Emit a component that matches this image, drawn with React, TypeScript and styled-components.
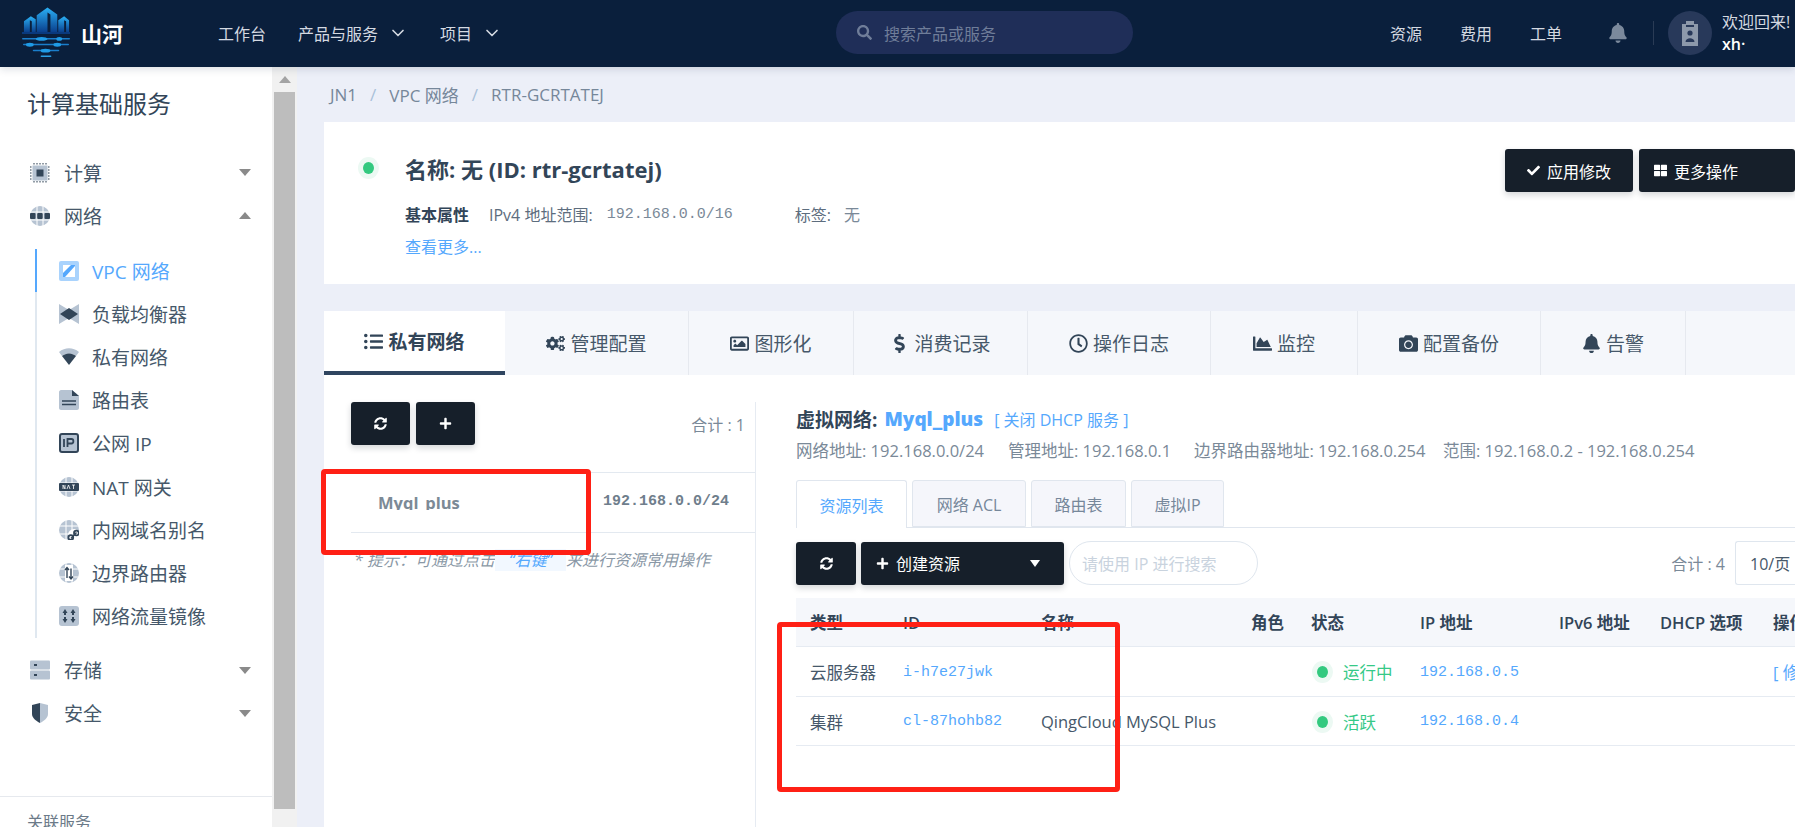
import React from 'react';
import styled, { createGlobalStyle } from 'styled-components';
import {
  FaBell,
  FaCamera,
  FaChartArea,
  FaCheck,
  FaCogs,
  FaDollarSign,
  FaListUl,
  FaPlus,
  FaRegClock,
  FaRegImage,
  FaSearch,
  FaSyncAlt,
  FaThLarge,
} from 'react-icons/fa';
import { FiChevronDown } from 'react-icons/fi';

const SANS = `"Open Sans", "Noto Sans CJK SC", sans-serif`;
const MONO = `"Liberation Mono", "Noto Sans CJK SC", monospace`;
const DARK = '#324558';
const LIGHT = '#b6c3d2';

const GlobalStyle = createGlobalStyle`
  html, body { margin: 0; padding: 0; height: 100%; background: #eceff8; }
  body { font-family: ${SANS}; color: #324558; }
  #root { height: 100%; }
  * { box-sizing: border-box; }
`;

const Logo = () => (
  <svg width="50" height="54" viewBox="0 0 50 54">
    <defs>
      <linearGradient id="tower" x1="0" y1="0" x2="0" y2="1">
        <stop offset="0" stopColor="#2ab0f5" />
        <stop offset="1" stopColor="#0a3f8c" />
      </linearGradient>
    </defs>
    <path d="M2 15 L9 10 L14 13 V26 H10 V15 L8 14 V26 H2 Z" fill="url(#tower)" />
    <path d="M15 9 L26 1 L36 8 V26 H29 V8 L26 6 V26 H15 Z" fill="url(#tower)" />
    <path d="M37 14 L43 10 L48 14 V26 H45 V15 L43 14 V26 H37 Z" fill="url(#tower)" />
    <rect x="0" y="26" width="49" height="2" fill="#0b3a7e" />
    <rect x="0" y="32" width="49" height="1.6" rx="0.8" fill="#1a7ecb" />
    <rect x="1" y="38" width="47" height="1.6" rx="0.8" fill="#1a7ecb" />
    <rect x="11" y="44" width="27" height="1.6" rx="0.8" fill="#1a7ecb" />
    <rect x="19" y="50" width="11" height="1.6" rx="0.8" fill="#2aa0e6" />
    <ellipse cx="20" cy="33" rx="6" ry="2" fill="#1f9be6" />
    <ellipse cx="38" cy="33" rx="3" ry="2" fill="#1f9be6" />
    <ellipse cx="8" cy="39" rx="4" ry="2" fill="#1f9be6" />
    <ellipse cx="36" cy="39" rx="4" ry="2" fill="#1f9be6" />
    <ellipse cx="24" cy="45" rx="5" ry="2" fill="#1f9be6" />
  </svg>
);

const AvatarGlyph = () => (
  <svg width="16" height="26" viewBox="0 0 16 26">
    <path d="M0 4 H4 V1 H12 V4 H16 V26 H0 Z" fill="#8d99ab" />
    <rect x="4" y="5" width="8" height="2" fill="#28395a" />
    <circle cx="8" cy="13" r="2.6" fill="#28395a" />
    <path d="M3.5 22 C3.5 17 12.5 17 12.5 22 Z" fill="#28395a" />
  </svg>
);

type IconName =
  | 'chip'
  | 'globe'
  | 'vpc'
  | 'lb'
  | 'wifi'
  | 'route'
  | 'ip'
  | 'nat'
  | 'link'
  | 'border'
  | 'mirror'
  | 'disk'
  | 'shield';

const Duotone = ({ name }: { name: IconName }) => {
  const ball = (
    <>
      <circle cx="10" cy="10" r="10" fill={LIGHT} />
      <path d="M7 0 V20 M13 0 V20 M0 6 H20 M0 14 H20" stroke="#fff" strokeWidth="1" />
    </>
  );
  const shapes: Record<IconName, React.ReactNode> = {
    chip: (
      <>
        <path d="M4 0V20M7 0V20M10 0V20M13 0V20M16 0V20M0 4H20M0 7H20M0 10H20M0 13H20M0 16H20" stroke={DARK} strokeWidth="1.5" strokeDasharray="1.5 1.5" opacity=".7" />
        <rect x="2.5" y="2.5" width="15" height="15" fill={LIGHT} />
        <rect x="6.5" y="6.5" width="7" height="7" fill={DARK} />
      </>
    ),
    globe: (
      <>
        {ball}
        <rect x="0" y="7" width="5.5" height="6" rx="1" fill={DARK} />
        <rect x="7.2" y="7" width="5.5" height="6" rx="1" fill={DARK} />
        <rect x="14.5" y="7" width="5.5" height="6" rx="1" fill={DARK} />
      </>
    ),
    vpc: (
      <>
        <rect width="20" height="20" rx="2" fill="#a9d3fd" />
        <path d="M4 4 H16 V16 H4 Z" fill="#fff" />
        <path d="M4 16 L4 12 L12 4 L16 4 L16 5 L6 16 Z" fill="#55a8fd" />
      </>
    ),
    lb: (
      <>
        <path d="M0 0 L10 6 L20 0 V20 L10 14 L0 20 Z" fill={LIGHT} />
        <path d="M10 4 L19 10 L10 16 L1 10 Z" fill={DARK} />
      </>
    ),
    wifi: (
      <>
        <path d="M0 5 C6 0 14 0 20 5 L17 9 C13 6 7 6 3 9 Z" fill={LIGHT} />
        <path d="M3 9 C7 5.5 13 5.5 17 9 L10 18 Z" fill={DARK} />
      </>
    ),
    route: (
      <>
        <path d="M2 0 H13 L20 6 V18 C20 19 19 20 18 20 H2 C1 20 0 19 0 18 V2 C0 1 1 0 2 0 Z" fill={LIGHT} />
        <path d="M13 0 L20 6 H13 Z" fill={DARK} />
        <path d="M3 11 H17 M3 14.5 H17" stroke={DARK} strokeWidth="1.6" />
      </>
    ),
    ip: (
      <>
        <rect x="1" y="1" width="18" height="18" rx="2" fill={LIGHT} stroke={DARK} strokeWidth="2" />
        <path d="M5 6 V14 M8.5 14 V6 H12.5 C15 6 15 10.5 12.5 10.5 H8.5" fill="none" stroke={DARK} strokeWidth="1.8" />
      </>
    ),
    nat: (
      <>
        {ball}
        <rect x="0" y="6" width="20" height="8" rx="1" fill={DARK} />
        <path d="M4 12V8L6 12V8M8 12L9.5 8L11 12M13 8H16M14.5 8V12" fill="none" stroke="#fff" strokeWidth=".8" />
      </>
    ),
    link: (
      <>
        {ball}
        <circle cx="15" cy="15" r="6" fill="#fff" />
        <path d="M12 18.5 L17.5 12.5" stroke={DARK} strokeWidth="1.5" />
        <circle cx="11.8" cy="17.5" r="2.4" fill="none" stroke={DARK} strokeWidth="1.8" />
        <circle cx="17.4" cy="13" r="2.4" fill="none" stroke={DARK} strokeWidth="1.8" />
      </>
    ),
    border: (
      <>
        {ball}
        <rect x="6" y="2" width="8" height="16" fill="#fff" />
        <path d="M8 15 V5 M6 7 L8 4.5 L10 7 M12 5.5 V16 M10 13.5 L12 16 L14 13.5" fill="none" stroke={DARK} strokeWidth="1.4" />
      </>
    ),
    mirror: (
      <>
        <rect width="20" height="20" rx="3" fill={LIGHT} />
        <path d="M3.5 7 L6 3 L8.5 7 H7 V9 H5 V7 Z M11.5 7 L14 3 L16.5 7 H15 V9 H13 V7 Z M3.5 13 L6 17 L8.5 13 H7 V11 H5 V13 Z M11.5 13 L14 17 L16.5 13 H15 V11 H13 V13 Z" fill={DARK} />
      </>
    ),
    disk: (
      <>
        <rect width="20" height="9" y="0.5" rx="1" fill={LIGHT} />
        <rect width="20" height="9" y="10.5" rx="1" fill={LIGHT} />
        <rect x="4" y="4" width="3" height="2" fill={DARK} />
        <rect x="4" y="14" width="3" height="2" fill={DARK} />
      </>
    ),
    shield: (
      <>
        <path d="M10 0 L2 2 V11 C2 15 6 18 10 20 Z" fill={DARK} />
        <path d="M10 0 L18 2 V11 C18 15 14 18 10 20 Z" fill={LIGHT} />
      </>
    ),
  };
  return (
    <svg width="20" height="20" viewBox="0 0 20 20" style={{ flex: 'none' }}>
      {shapes[name]}
    </svg>
  );
};

const Page = styled.div`
  width: 1795px;
  height: 827px;
  display: flex;
  flex-direction: column;
  overflow: hidden;
`;

const Header = styled.header`
  flex: none;
  height: 67px;
  padding: 0 0 2px 22px;
  display: flex;
  align-items: center;
  background: #0a1f3c;
  color: #d4d9e1;
  font-size: 16px;
  white-space: nowrap;
  box-shadow: 0 2px 8px rgba(10, 31, 60, 0.15);
  position: relative;
  z-index: 2;
  > * { flex: none; }
`;

const Brand = styled.div`
  display: flex;
  align-items: center;
  gap: 10px;
  width: 101px;
  color: #fff;
  font-size: 21px;
  font-weight: 700;
`;

const Nav = styled.nav`
  margin-left: 95px;
  width: 280px;
  display: flex;
  align-items: center;
  gap: 32px;
`;

const NavItem = styled.span`
  display: inline-flex;
  align-items: center;
  gap: 10px;
  svg { font-size: 20px; }
`;

const Search = styled.div`
  margin-left: 338px;
  width: 297px;
  height: 43px;
  border-radius: 22px;
  background: #1f2e58;
  padding-left: 21px;
  display: flex;
  align-items: center;
  gap: 12px;
  color: #6f7d99;
  font-size: 16px;
`;

const RightNav = styled.div`
  margin-left: 257px;
  display: flex;
  align-items: center;
  gap: 38px;
`;

const BellButton = styled.span`
  display: inline-flex;
  margin: 0 25px 0 8px;
  font-size: 20px;
  color: #7b899c;
`;

const Divider = styled.span`
  width: 1px;
  height: 24px;
  background: #2a3b55;
`;

const Avatar = styled.div`
  margin-left: 14px;
  width: 44px;
  height: 44px;
  border-radius: 50%;
  background: #28395a;
  display: flex;
  align-items: center;
  justify-content: center;
`;

const Welcome = styled.div`
  margin-left: 10px;
  font-size: 16px;
  line-height: 22px;
  strong { display: block; color: #fff; font-weight: 600; }
`;

const Body = styled.div`
  flex: 1;
  min-height: 0;
  display: flex;
`;

const Sidebar = styled.aside`
  flex: none;
  width: 272px;
  background: #fff;
  display: flex;
  flex-direction: column;
  overflow: hidden;
`;

const SideTitle = styled.h2`
  margin: 22px 0 32px;
  padding-left: 27px;
  font-size: 24px;
  line-height: 30px;
  font-weight: 400;
  color: #324558;
`;

const MenuItem = styled.div`
  height: 43px;
  padding: 0 21px 0 30px;
  display: flex;
  align-items: center;
  gap: 14px;
  font-size: 19px;
  color: #46586a;
`;

const Caret = styled.span<{ $up?: boolean }>`
  margin-left: auto;
  width: 0;
  height: 0;
  border-left: 6.5px solid transparent;
  border-right: 6.5px solid transparent;
  ${(p) => (p.$up ? 'border-bottom: 7px solid #8a8a8a;' : 'border-top: 7px solid #8a8a8a;')}
`;

const SubList = styled.div`
  margin: 12px 0 11px 35px;
  border-left: 2px solid #e0e8f0;
`;

const SubItem = styled.div<{ $active?: boolean }>`
  height: 43.2px;
  margin-left: -2px;
  padding-left: 22px;
  border-left: 2px solid ${(p) => (p.$active ? '#55a8fd' : 'transparent')};
  display: flex;
  align-items: center;
  gap: 13px;
  font-size: 19px;
  color: ${(p) => (p.$active ? '#55a8fd' : '#46586a')};
`;

const SideFooter = styled.div`
  margin-top: auto;
  height: 31px;
  flex: none;
  padding: 14px 0 0 27px;
  border-top: 1px solid #e6e9ee;
  font-size: 16px;
  line-height: 22px;
  color: #6b7a88;
`;

const Rail = styled.div`
  flex: none;
  width: 25px;
  padding: 0 2px;
  background: #f1f1f1;
  display: flex;
  flex-direction: column;
`;

const RailArrow = styled.div`
  height: 25px;
  display: flex;
  align-items: center;
  justify-content: center;
  &::before {
    content: '';
    border-left: 6px solid transparent;
    border-right: 6px solid transparent;
    border-bottom: 7px solid #a3a3a3;
  }
`;

const RailThumb = styled.div`
  height: 717px;
  background: #bdbdbd;
`;

const Main = styled.main`
  flex: 1;
  min-width: 0;
  padding-left: 27px;
  overflow: hidden;
`;

const Crumbs = styled.div`
  height: 55px;
  padding-left: 6px;
  display: flex;
  align-items: center;
  gap: 13px;
  font-size: 17px;
  color: #76879a;
  i { color: #a8c0d8; font-style: normal; }
`;

const InfoCard = styled.section`
  height: 162px;
  padding: 27px 0 0 39px;
  background: #fff;
  display: flex;
  justify-content: space-between;
  align-items: flex-start;
`;

const InfoText = styled.div`
  padding-top: 4px;
`;

const NameLine = styled.div`
  display: flex;
  align-items: center;
  gap: 31px;
  height: 30px;
  font-size: 22px;
  font-weight: 700;
  color: #324558;
`;

const Dot = styled.span`
  flex: none;
  width: 11px;
  height: 12px;
  border-radius: 50%;
  background: #33c97f;
  box-shadow: 0 0 0 5px #ecf9f3;
`;

const AttrLine = styled.div`
  margin: 19px 0 0 42px;
  height: 24px;
  display: flex;
  align-items: center;
  font-size: 16px;
  color: #5d6d7e;
  strong { font-weight: 600; color: #324558; margin-right: 20px; }
`;

const Mono = styled.span`
  font-family: ${MONO};
  font-size: 15px;
`;

const AttrValue = styled(Mono)`
  margin-left: 14px;
  color: #7a8998;
`;

const TagLabel = styled.span`
  margin-left: 62px;
  span { color: #7a8998; margin-left: 13px; }
`;

const MoreLink = styled.a`
  display: block;
  margin: 9px 0 0 42px;
  font-size: 16px;
  line-height: 24px;
  color: #55a8fd;
`;

const Actions = styled.div`
  display: flex;
  gap: 6px;
  flex: none;
`;

const DarkButton = styled.button<{ $width: number; $start?: boolean }>`
  width: ${(p) => p.$width}px;
  height: 43px;
  padding: ${(p) => (p.$start ? '0 0 0 15px' : '0')};
  border: 0;
  border-radius: 3px;
  background: #161f2a;
  color: #fff;
  font-family: ${SANS};
  font-size: 16px;
  display: inline-flex;
  align-items: center;
  justify-content: ${(p) => (p.$start ? 'flex-start' : 'center')};
  gap: 7px;
  box-shadow: 0 3px 6px rgba(22, 31, 42, 0.18);
  flex: none;
  svg { font-size: 13px; }
`;

const Panel = styled.section`
  margin-top: 27px;
  background: #fff;
  height: 516px;
`;

const TabBar = styled.div`
  display: flex;
  height: 64px;
  background: #f5f7fb;
`;

const Tab = styled.div<{ $width: number; $active?: boolean }>`
  flex: none;
  width: ${(p) => p.$width}px;
  display: flex;
  align-items: center;
  justify-content: center;
  gap: 5px;
  font-size: 19px;
  color: #46586a;
  border-right: 1px solid #e6e9ef;
  ${(p) =>
    p.$active &&
    `background: #fff; font-weight: 700; color: #324558; border-bottom: 4px solid #2f4560; border-right: 0;`}
  svg { color: #324558; font-size: 19px; }
`;

const PanelBody = styled.div`
  display: flex;
  height: 452px;
`;

const LeftPane = styled.div`
  flex: none;
  width: 432px;
  margin-top: 27px;
  border-right: 1px solid #e6ebf2;
`;

const LeftTools = styled.div`
  height: 70px;
  padding: 0 10px 27px 27px;
  display: flex;
  align-items: center;
  gap: 6px;
`;

const Total = styled.span`
  margin-left: auto;
  font-size: 16px;
  color: #7a8998;
  white-space: nowrap;
`;

const NetRow = styled.div`
  margin-left: 27px;
  height: 61px;
  padding: 0 26px 2px 27px;
  border-top: 1px solid #e3e9f0;
  border-bottom: 1px solid #e3e9f0;
  display: flex;
  align-items: center;
  justify-content: space-between;
  font-size: 16.5px;
  font-weight: 700;
  color: #7c8a96;
`;

const NetName = styled.span`
  display: block;
  height: 17px;
  line-height: 19px;
  overflow: hidden;
`;

const NetAddress = styled(Mono)`
  font-weight: 700;
  color: #6f7e8c;
`;

const Hint = styled.div`
  margin: 16px 0 0 30px;
  font-size: 16px;
  line-height: 22px;
  font-style: italic;
  color: #8a98a6;
  white-space: nowrap;
  em { color: #55a8fd; background: #f2f8ff; padding: 0 14px; }
`;

const RightPane = styled.div`
  flex: 1;
  min-width: 0;
  padding: 29px 0 0 40px;
`;

const NetTitle = styled.div`
  height: 30px;
  display: flex;
  align-items: center;
  font-size: 19px;
  font-weight: 700;
  color: #324558;
  b { margin: 0 11px 0 7px; font-size: 19px; color: #55a8fd; }
  a { font-size: 16px; font-weight: 400; color: #55a8fd; }
`;

const NetMeta = styled.div`
  margin-top: 6px;
  height: 22px;
  display: flex;
  font-size: 16.5px;
  line-height: 22px;
  color: #7a8998;
  white-space: nowrap;
`;

const MetaField = styled.span<{ $width: number }>`
  flex: none;
  width: ${(p) => p.$width}px;
`;

const SubTabs = styled.div`
  margin-top: 18px;
  height: 48px;
  display: flex;
  gap: 5px;
  border-bottom: 1px solid #e0e6ee;
`;

const SubTab = styled.div<{ $width: number; $active?: boolean }>`
  flex: none;
  width: ${(p) => p.$width}px;
  height: ${(p) => (p.$active ? 48 : 47)}px;
  display: flex;
  align-items: center;
  justify-content: center;
  font-size: 16px;
  border: 1px solid #e0e6ee;
  border-radius: 3px 3px 0 0;
  background: ${(p) => (p.$active ? '#fff' : '#f5f6fb')};
  color: ${(p) => (p.$active ? '#55a8fd' : '#76879a')};
  ${(p) => p.$active && 'border-bottom: 0;'}
`;

const Tools = styled.div`
  margin-top: 13px;
  height: 44px;
  display: flex;
  align-items: center;
  gap: 5px;
`;

const Caret2 = styled.span`
  margin-left: auto;
  margin-right: 24px;
  border-left: 5px solid transparent;
  border-right: 5px solid transparent;
  border-top: 7px solid #fff;
`;

const SearchPill = styled.div`
  flex: none;
  width: 189px;
  height: 44px;
  padding-left: 12px;
  border: 1px solid #dfe6ee;
  border-radius: 22px;
  display: flex;
  align-items: center;
  font-size: 16px;
  color: #c9d3de;
`;

const PageSize = styled.div`
  flex: none;
  width: 60px;
  height: 44px;
  margin-left: 5px;
  padding-left: 14px;
  border: 1px solid #dfe6ee;
  border-radius: 3px 0 0 3px;
  border-right: 0;
  display: flex;
  align-items: center;
  font-size: 16px;
  color: #46586a;
  white-space: nowrap;
  overflow: hidden;
`;

const Table = styled.div`
  margin-top: 13px;
`;

const TableRow = styled.div<{ $head?: boolean }>`
  height: ${(p) => (p.$head ? 49 : 49.5)}px;
  padding-top: ${(p) => (p.$head ? 0 : 2)}px;
  display: grid;
  grid-template-columns: 93px 138px 210px 60px 109px 139px 101px 113px 36px;
  align-items: center;
  border-bottom: 1px solid #e6ebf2;
  font-size: 16.5px;
  white-space: nowrap;
  overflow: hidden;
  background: ${(p) => (p.$head ? '#f5f7fb' : '#fff')};
  color: ${(p) => (p.$head ? '#324558' : '#46586a')};
  font-weight: ${(p) => (p.$head ? 600 : 400)};
  > * { padding-left: 14px; }
`;

const Link = styled(Mono)`
  color: #55a8fd;
`;

const EditLink = styled.a`
  color: #55a8fd;
`;

const StatusCell = styled.span`
  display: flex;
  align-items: center;
  gap: 15px;
  color: #36c987;
  padding-left: 20px;
`;

const Mark = styled.div<{ $width: number; $height: number; $top: number; $left: number }>`
  position: absolute;
  left: ${(p) => p.$left}px;
  top: ${(p) => p.$top}px;
  width: ${(p) => p.$width}px;
  height: ${(p) => p.$height}px;
  border: 5px solid #ff2015;
  border-radius: 4px;
  pointer-events: none;
  z-index: 3;
`;

const TABS = [
  { label: '私有网络', width: 181, icon: <FaListUl /> },
  { label: '管理配置', width: 184, icon: <FaCogs /> },
  { label: '图形化', width: 165, icon: <FaRegImage /> },
  { label: '消费记录', width: 174, icon: <FaDollarSign /> },
  { label: '操作日志', width: 183, icon: <FaRegClock /> },
  { label: '监控', width: 147, icon: <FaChartArea /> },
  { label: '配置备份', width: 183, icon: <FaCamera /> },
  { label: '告警', width: 145, icon: <FaBell /> },
];

const SUB_MENU: { label: string; icon: IconName }[] = [
  { label: 'VPC 网络', icon: 'vpc' },
  { label: '负载均衡器', icon: 'lb' },
  { label: '私有网络', icon: 'wifi' },
  { label: '路由表', icon: 'route' },
  { label: '公网 IP', icon: 'ip' },
  { label: 'NAT 网关', icon: 'nat' },
  { label: '内网域名别名', icon: 'link' },
  { label: '边界路由器', icon: 'border' },
  { label: '网络流量镜像', icon: 'mirror' },
];

const SUB_TABS = [
  { label: '资源列表', width: 111 },
  { label: '网络 ACL', width: 114 },
  { label: '路由表', width: 95 },
  { label: '虚拟IP', width: 93 },
];

const HEADERS = ['类型', 'ID', '名称', '角色', '状态', 'IP 地址', 'IPv6 地址', 'DHCP 选项', '操作'];

const App = () => (
  <Page>
    <GlobalStyle />
    <Header>
      <Brand>
        <Logo />
        山河
      </Brand>
      <Nav>
        <NavItem>工作台</NavItem>
        <NavItem>
          产品与服务 <FiChevronDown />
        </NavItem>
        <NavItem>
          项目 <FiChevronDown />
        </NavItem>
      </Nav>
      <Search>
        <FaSearch size={15} />
        搜索产品或服务
      </Search>
      <RightNav>
        <span>资源</span>
        <span>费用</span>
        <span>工单</span>
        <BellButton>
          <FaBell />
        </BellButton>
      </RightNav>
      <Divider />
      <Avatar>
        <AvatarGlyph />
      </Avatar>
      <Welcome>
        欢迎回来!
        <strong>xh·</strong>
      </Welcome>
    </Header>
    <Body>
      <Sidebar>
        <SideTitle>计算基础服务</SideTitle>
        <MenuItem>
          <Duotone name="chip" />
          计算
          <Caret />
        </MenuItem>
        <MenuItem>
          <Duotone name="globe" />
          网络
          <Caret $up />
        </MenuItem>
        <SubList>
          {SUB_MENU.map((item, i) => (
            <SubItem key={item.label} $active={i === 0}>
              <Duotone name={item.icon} />
              {item.label}
            </SubItem>
          ))}
        </SubList>
        <MenuItem>
          <Duotone name="disk" />
          存储
          <Caret />
        </MenuItem>
        <MenuItem>
          <Duotone name="shield" />
          安全
          <Caret />
        </MenuItem>
        <SideFooter>关联服务</SideFooter>
      </Sidebar>
      <Rail>
        <RailArrow />
        <RailThumb />
      </Rail>
      <Main>
        <Crumbs>
          <span>JN1</span>
          <i>/</i>
          <span>VPC 网络</span>
          <i>/</i>
          <span>RTR-GCRTATEJ</span>
        </Crumbs>
        <InfoCard>
          <InfoText>
            <NameLine>
              <Dot />
              名称: 无 (ID: rtr-gcrtatej)
            </NameLine>
            <AttrLine>
              <strong>基本属性</strong>
              IPv4 地址范围:
              <AttrValue>192.168.0.0/16</AttrValue>
              <TagLabel>
                标签:<span>无</span>
              </TagLabel>
            </AttrLine>
            <MoreLink>查看更多...</MoreLink>
          </InfoText>
          <Actions>
            <DarkButton $width={128}>
              <FaCheck />
              应用修改
            </DarkButton>
            <DarkButton $width={156} $start>
              <FaThLarge />
              更多操作
            </DarkButton>
          </Actions>
        </InfoCard>
        <Panel>
          <TabBar>
            {TABS.map((tab, i) => (
              <Tab key={tab.label} $width={tab.width} $active={i === 0}>
                {tab.icon}
                {tab.label}
              </Tab>
            ))}
          </TabBar>
          <PanelBody>
            <LeftPane>
              <LeftTools>
                <DarkButton $width={59}>
                  <FaSyncAlt />
                </DarkButton>
                <DarkButton $width={59}>
                  <FaPlus />
                </DarkButton>
                <Total>合计 : 1</Total>
              </LeftTools>
              <NetRow>
                <NetName>Myql_plus</NetName>
                <NetAddress>192.168.0.0/24</NetAddress>
              </NetRow>
              <Hint>
                * 提示：可通过点击<em>“右键”</em>来进行资源常用操作
              </Hint>
            </LeftPane>
            <RightPane>
              <NetTitle>
                虚拟网络:
                <b>Myql_plus</b>
                <a>[ 关闭 DHCP 服务 ]</a>
              </NetTitle>
              <NetMeta>
                <MetaField $width={212}>网络地址: 192.168.0.0/24</MetaField>
                <MetaField $width={186}>管理地址: 192.168.0.1</MetaField>
                <MetaField $width={249}>边界路由器地址: 192.168.0.254</MetaField>
                <MetaField $width={260}>范围: 192.168.0.2 - 192.168.0.254</MetaField>
              </NetMeta>
              <SubTabs>
                {SUB_TABS.map((tab, i) => (
                  <SubTab key={tab.label} $width={tab.width} $active={i === 0}>
                    {tab.label}
                  </SubTab>
                ))}
              </SubTabs>
              <Tools>
                <DarkButton $width={60}>
                  <FaSyncAlt />
                </DarkButton>
                <DarkButton $width={203} $start>
                  <FaPlus />
                  创建资源
                  <Caret2 />
                </DarkButton>
                <SearchPill>请使用 IP 进行搜索</SearchPill>
                <Total>合计 : 4</Total>
                <PageSize>10/页</PageSize>
              </Tools>
              <Table>
                <TableRow $head>
                  {HEADERS.map((h) => (
                    <span key={h}>{h}</span>
                  ))}
                </TableRow>
                <TableRow>
                  <span>云服务器</span>
                  <Link>i-h7e27jwk</Link>
                  <span />
                  <span />
                  <StatusCell>
                    <Dot />
                    运行中
                  </StatusCell>
                  <Link>192.168.0.5</Link>
                  <span />
                  <span />
                  <EditLink>[ 修改 ]</EditLink>
                </TableRow>
                <TableRow>
                  <span>集群</span>
                  <Link>cl-87hohb82</Link>
                  <span>QingCloud MySQL Plus</span>
                  <span />
                  <StatusCell>
                    <Dot />
                    活跃
                  </StatusCell>
                  <Link>192.168.0.4</Link>
                  <span />
                  <span />
                  <span />
                </TableRow>
              </Table>
            </RightPane>
          </PanelBody>
        </Panel>
      </Main>
    </Body>
    <Mark $left={321} $top={469} $width={270} $height={86} />
    <Mark $left={777} $top={622} $width={343} $height={170} />
  </Page>
);

export default App;
